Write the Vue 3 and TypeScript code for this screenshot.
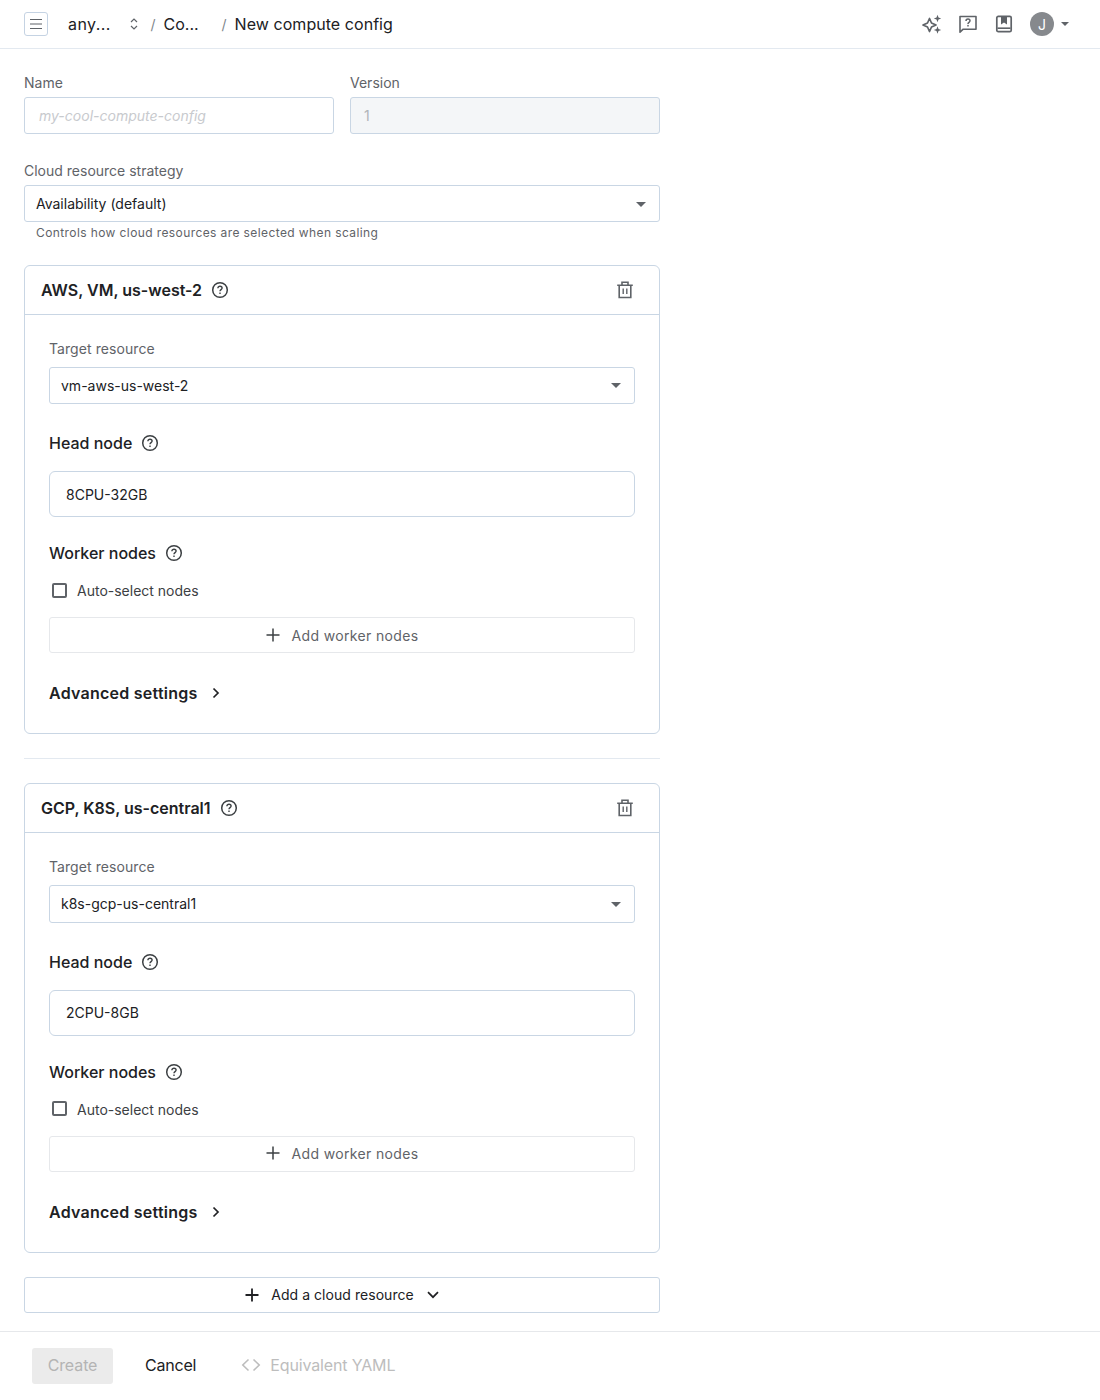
<script setup lang="ts">
interface Res { title: string; target: string; head: string }
const resources: Res[] = [
  { title: 'AWS, VM, us-west-2', target: 'vm-aws-us-west-2', head: '8CPU-32GB' },
  { title: 'GCP, K8S, us-central1', target: 'k8s-gcp-us-central1', head: '2CPU-8GB' },
]
</script>

<template>
  <div class="page">
    <header class="topbar">
      <div class="crumbs">
        <button class="menu-btn" aria-label="menu">
          <svg width="14" height="12" viewBox="0 0 14 12" fill="none" stroke="#5f6368" stroke-width="1.2"><path d="M1 1.5h12M1 6h12M1 10.5h12" /></svg>
        </button>
        <span class="crumb c1">any...</span>
        <svg class="updown" width="10" height="14" viewBox="0 0 10 14" fill="none" stroke="#5f6368" stroke-width="1.2"><path d="M2 5l3-3 3 3M2 9l3 3 3-3" /></svg>
        <span class="sep s1">/</span>
        <span class="crumb c2">Co...</span>
        <span class="sep s2">/</span>
        <span class="crumb c3">New compute config</span>
      </div>
      <div class="top-actions">
        <svg class="ti" width="20" height="20" viewBox="0 0 20 20" fill="none">
          <path d="M7.5 4.5l2 4.5 4.5 2-4.5 2-2 4.5-2-4.5-4.5-2 4.5-2z" stroke="#5f6368" stroke-width="1.7" stroke-linejoin="round" />
          <path d="M15.5 .8l1 2.7 2.7 1-2.7 1-1 2.7-1-2.7-2.7-1 2.7-1zM15.5 12.3l1 2.7 2.7 1-2.7 1-1 2.7-1-2.7-2.7-1 2.7-1z" fill="#5f6368" />
        </svg>
        <svg class="ti" width="20" height="20" viewBox="0 0 20 20" fill="none">
          <path d="M2 2.5h16v12.7H5.2L2 18.2z" stroke="#5f6368" stroke-width="1.6" stroke-linejoin="round" />
          <path d="M8 6.9c0-1.2.9-2 2-2s2 .8 2 1.9c0 1.5-2 1.6-2 3.1" stroke="#5f6368" stroke-width="1.5" />
          <rect x="9.25" y="10.9" width="1.5" height="1.6" fill="#5f6368" />
        </svg>
        <svg class="ti" width="20" height="20" viewBox="0 0 20 20" fill="none">
          <rect x="2.8" y="2.3" width="14.4" height="15.4" rx="1.5" stroke="#5f6368" stroke-width="1.7" />
          <path d="M3.5 14.2h13" stroke="#5f6368" stroke-width="1.6" />
          <path d="M7 3h6v7.5l-3-2-3 2z" fill="#5f6368" />
        </svg>
        <div class="user">
          <span class="avatar">J</span>
          <span class="mini-caret"></span>
        </div>
      </div>
    </header>

    <main class="content">
      <div class="row-top">
        <label class="field name">
          <span class="lbl">Name</span>
          <div class="box"><span class="ph">my-cool-compute-config</span></div>
        </label>
        <label class="field version">
          <span class="lbl">Version</span>
          <div class="box disabled"><span class="dis-val">1</span></div>
        </label>
      </div>

      <div class="field strategy">
        <span class="lbl">Cloud resource strategy</span>
        <div class="select"><span>Availability (default)</span><i class="caret"></i></div>
        <span class="helper">Controls how cloud resources are selected when scaling</span>
      </div>

      <template v-for="(r, i) in resources" :key="r.title">
        <hr v-if="i > 0" class="divider" />
        <section class="card">
          <div class="card-head">
            <h2>{{ r.title }}</h2>
            <svg class="help" width="18" height="18" viewBox="0 0 18 18" fill="none">
              <circle cx="9" cy="9" r="7.3" stroke="#3c4043" stroke-width="1.5" />
              <path d="M6.9 7.2c0-1.2.9-1.9 2.1-1.9s2.1.7 2.1 1.8c0 1.5-2.1 1.6-2.1 3.2" stroke="#3c4043" stroke-width="1.4" />
              <rect x="8.3" y="11.5" width="1.4" height="1.5" fill="#3c4043" />
            </svg>
            <svg class="trash" width="18" height="18" viewBox="0 0 18 18" fill="none" stroke="#5f6368" stroke-width="1.6">
              <path d="M1.2 4.2h15.6M6 4V1.3h6V4M3.2 4.2v12.3h11.6V4.2" />
              <path d="M7.2 7.5v5.5M10.8 7.5v5.5" stroke-width="1.4" />
            </svg>
          </div>
          <div class="card-body">
            <div class="field">
              <span class="lbl target-lbl">Target resource</span>
              <div class="select target-select"><span>{{ r.target }}</span><i class="caret"></i></div>
            </div>
            <div class="section-title head-title">
              <span>Head node</span>
              <svg width="18" height="18" viewBox="0 0 18 18" fill="none">
                <circle cx="9" cy="9" r="7.3" stroke="#3c4043" stroke-width="1.5" />
                <path d="M6.9 7.2c0-1.2.9-1.9 2.1-1.9s2.1.7 2.1 1.8c0 1.5-2.1 1.6-2.1 3.2" stroke="#3c4043" stroke-width="1.4" />
                <rect x="8.3" y="11.5" width="1.4" height="1.5" fill="#3c4043" />
              </svg>
            </div>
            <div class="node-box">{{ r.head }}</div>
            <div class="section-title worker-title">
              <span>Worker nodes</span>
              <svg width="18" height="18" viewBox="0 0 18 18" fill="none">
                <circle cx="9" cy="9" r="7.3" stroke="#3c4043" stroke-width="1.5" />
                <path d="M6.9 7.2c0-1.2.9-1.9 2.1-1.9s2.1.7 2.1 1.8c0 1.5-2.1 1.6-2.1 3.2" stroke="#3c4043" stroke-width="1.4" />
                <rect x="8.3" y="11.5" width="1.4" height="1.5" fill="#3c4043" />
              </svg>
            </div>
            <label class="check"><i class="checkbox"></i><span>Auto-select nodes</span></label>
            <button class="add-worker">
              <svg width="14" height="14" viewBox="0 0 14 14" stroke="#3c4043" stroke-width="1.5"><path d="M7 .5v13M.5 7h13" /></svg>
              <span>Add worker nodes</span>
            </button>
            <div class="advanced">
              <span>Advanced settings</span>
              <svg width="8" height="12" viewBox="0 0 8 12" fill="none" stroke="#202124" stroke-width="1.7"><path d="M1.5 1.5L6 6l-4.5 4.5" /></svg>
            </div>
          </div>
        </section>
      </template>

      <button class="add-cloud">
        <svg width="14" height="14" viewBox="0 0 14 14" stroke="#202124" stroke-width="1.8"><path d="M7 .5v13M.5 7h13" /></svg>
        <span>Add a cloud resource</span>
        <svg class="cloud-chev" width="12" height="8" viewBox="0 0 12 8" fill="none" stroke="#202124" stroke-width="1.7"><path d="M1 1.2l5 5 5-5" /></svg>
      </button>
    </main>

    <footer class="footer">
      <button class="create">Create</button>
      <button class="cancel">Cancel</button>
      <span class="yaml">
        <svg width="20" height="14" viewBox="0 0 20 14" fill="none" stroke="#bdbdbd" stroke-width="1.6"><path d="M7.5 1.5L1.8 7l5.7 5.5M12.5 1.5L18.2 7l-5.7 5.5" /></svg>
        Equivalent YAML
      </span>
    </footer>
  </div>
</template>

<style>
html, body { margin: 0; background: #fff; }
</style>

<style scoped>
.page {
  width: 1100px;
  height: 1400px;
  background: #fff;
  font-family: Inter, "Liberation Sans", sans-serif;
  color: #202124;
  overflow: hidden;
}
button { font-family: inherit; background: #fff; cursor: pointer; padding: 0; }

.topbar {
  height: 48px;
  border-bottom: 1px solid #e3e9f0;
  display: flex;
  align-items: center;
  justify-content: space-between;
  padding: 0 31px 0 24px;
}
.crumbs { display: flex; align-items: center; }
.menu-btn {
  width: 24px; height: 24px;
  border: 1px solid #c5d3e3;
  border-radius: 3px;
  display: flex; align-items: center; justify-content: center;
}
.crumb { font-size: 16px; line-height: 24px; white-space: nowrap; }
.c1 { margin-left: 20px; width: 56px; letter-spacing: 0.4px; }
.updown { margin-left: 5px; }
.sep { color: #80868b; font-size: 14px; }
.s1 { margin-left: 11.5px; }
.c2 { margin-left: 8px; width: 53px; }
.s2 { margin-left: 5px; }
.c3 { margin-left: 8px; letter-spacing: 0.05px; }

.top-actions { display: flex; align-items: center; }
.ti { margin-right: 16px; display: block; }
.user { display: flex; align-items: center; }
.avatar {
  width: 24px; height: 24px; border-radius: 50%;
  background: #86898d; color: #fff;
  font-size: 14px; display: flex; align-items: center; justify-content: center;
}
.mini-caret {
  margin-left: 7px;
  border-left: 4px solid transparent;
  border-right: 4px solid transparent;
  border-top: 4px solid #5f6368;
}

.content { width: 636px; padding: 24px 0 0 24px; }
.row-top { display: flex; gap: 16px; }
.field { display: flex; flex-direction: column; }
.name { width: 310px; }
.version { width: 310px; }
.lbl {
  font-size: 14px; line-height: 20px; color: #5f6368;
  margin-bottom: 4px;
}
.target-lbl { margin-bottom: 8px; letter-spacing: 0.07px; }
.box {
  height: 37px; box-sizing: border-box;
  border: 1px solid #c9d6e4; border-radius: 3px;
  display: flex; align-items: center; padding-left: 14px;
  font-size: 14px;
}
.ph { color: #c8cace; font-style: italic; }
.disabled { background: #f4f6f8; padding-left: 13px; }
.dis-val { color: #b0b4b8; }

.strategy { margin-top: 27px; }
.select {
  height: 37px; box-sizing: border-box;
  border: 1px solid #c9d6e4; border-radius: 3px;
  display: flex; align-items: center; justify-content: space-between;
  padding: 0 13px 0 11px;
  font-size: 14px;
}
.target-select { height: 37.4px; padding-bottom: 0.6px; }
.caret {
  margin-top: 1px;
  border-left: 5px solid transparent;
  border-right: 5px solid transparent;
  border-top: 5px solid #5f6368;
}
.helper {
  margin-top: 4px; padding-left: 12px;
  font-size: 12px; line-height: 14px; color: #5f6368; letter-spacing: 0.4px;
}

.card {
  border: 1px solid #c9d6e4; border-radius: 6px;
  box-sizing: border-box;
}
.strategy + .card { margin-top: 25px; }
.card-head {
  height: 48px; border-bottom: 1px solid #c9d6e4;
  display: flex; align-items: center; padding: 0 25px 0 16px;
}
.card-head h2 { margin: 0; font-size: 16px; font-weight: 600; }
.help { margin-left: 9px; }
.trash { margin-left: auto; }
.card-body { padding: 24px 24px 28px; }

.section-title {
  display: flex; align-items: center; gap: 9px;
  font-size: 16px; line-height: 24px; font-weight: 500;
}
.head-title { margin-top: 27px; }
.node-box {
  margin-top: 16px; height: 46px; box-sizing: border-box;
  border: 1px solid #c9d6e4; border-radius: 6px;
  display: flex; align-items: center; padding-left: 16px; padding-bottom: 0.6px;
  font-size: 14px;
}
.worker-title { margin-top: 24px; }
.check {
  margin-top: 13px; height: 24px;
  display: flex; align-items: center; gap: 10px;
  font-size: 14px; color: #3c4043;
}
.checkbox {
  width: 15px; height: 15px; box-sizing: border-box; margin-left: 2.5px;
  border: 2px solid #5f6368; border-radius: 2px;
}
.check span { margin-left: 0.5px; position: relative; top: 0.3px; }
.add-worker {
  margin-top: 15px; width: 100%; height: 36px; box-sizing: border-box;
  border: 1px solid #e6e8eb; border-radius: 3px;
  display: flex; align-items: center; justify-content: center; gap: 12px;
  font-size: 14px; color: #5f6368; letter-spacing: 0.35px; padding-bottom: 0.6px;
}
.advanced {
  margin-top: 28px;
  display: flex; align-items: center; gap: 14px;
  font-size: 16px; line-height: 24px; font-weight: 600; letter-spacing: 0.25px;
}
.divider {
  margin: 24px 0; border: 0; border-top: 1px solid #e3e9f0;
}
.add-cloud {
  margin-top: 24px; width: 100%; height: 36px; box-sizing: border-box;
  border: 1px solid #c9d6e4; border-radius: 3px;
  display: flex; align-items: center; justify-content: center; gap: 12px;
  font-size: 14px; color: #202124; letter-spacing: 0.05px;
}
.cloud-chev { margin-left: 1px; }
.footer {
  margin-top: 18px; border-top: 1px solid #e6e8eb;
  height: 69px; display: flex; align-items: center; padding-left: 32px;
  box-sizing: border-box;
}
.create {
  width: 81px; height: 36px; border: 0; border-radius: 3px; padding-bottom: 1px;
  background: #ebebeb; color: #b4b4b4; font-size: 16px; letter-spacing: -0.1px;
}
.cancel { margin-left: 32px; border: 0; font-size: 16px; color: #202124; letter-spacing: -0.2px; padding-bottom: 1px; }
.yaml {
  margin-left: 45px; display: flex; align-items: center; gap: 9px; padding-bottom: 1px;
  font-size: 16px; color: #bdbdbd; letter-spacing: -0.15px;
}
</style>
